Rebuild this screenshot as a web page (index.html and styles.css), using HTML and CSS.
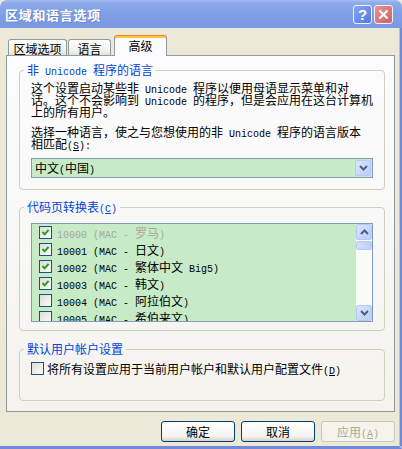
FILE: index.html
```html
<!DOCTYPE html>
<html lang="zh-CN">
<head>
<meta charset="utf-8">
<title>区域和语言选项</title>
<link rel="stylesheet" href="styles.css">
</head>
<body>
<div class="win">
  <div class="titlebar">
    <span class="title">区域和语言选项</span>
    <div class="tbtns">
      <span class="tb help">?</span>
      <span class="tb close"><svg width="11" height="11" viewBox="0 0 11 11"><path d="M1.5 1.5 L9.5 9.5 M9.5 1.5 L1.5 9.5" stroke="#fff" stroke-width="2.2" fill="none"/></svg></span>
    </div>
  </div>
  <div class="body">
    <div class="client">
      <div class="tabs">
        <div class="tab t1">区域选项</div>
        <div class="tab t2">语言</div>
        <div class="tab active">高级</div>
      </div>
      <div class="panel">
        <fieldset class="g1">
          <legend><span class="ln">非<span class="en"> Unicode </span>程序的语言</span></legend>
          <div class="txt">
            <span class="ln">这个设置启动某些非<span class="en"> Unicode </span>程序以便用母语显示菜单和对</span>
            <span class="ln">话。这个不会影响到<span class="en"> Unicode </span>的程序，但是会应用在这台计算机</span>
            <span class="ln">上的所有用户。</span>
          </div>
          <div class="txt p2">
            <span class="ln">选择一种语言，使之与您想使用的非<span class="en"> Unicode </span>程序的语言版本</span>
            <span class="ln">相匹配<span class="en">(<u>S</u>):</span></span>
          </div>
          <div class="combo">
            <span class="combo-text ln">中文<span class="en">(</span>中国<span class="en">)</span></span>
            <span class="drop"><svg width="9" height="6" viewBox="0 0 9 6"><path d="M1 1 L4.5 4.5 L8 1" stroke="#4d6185" stroke-width="2" fill="none"/></svg></span>
          </div>
        </fieldset>
        <fieldset class="g2">
          <legend><span class="ln">代码页转换表<span class="en">(<u>C</u>)</span></span></legend>
          <div class="list">
            <div class="rows">
              <div class="row dis"><span class="cb"><svg width="9" height="9" viewBox="0 0 9 9"><path d="M1.5 4 L3.6 6.3 L7.6 1.8" stroke="#21a121" stroke-width="2" fill="none"/></svg></span><span class="ln"><span class="en">10000 (MAC - </span>罗马<span class="en">)</span></span></div>
              <div class="row"><span class="cb"><svg width="9" height="9" viewBox="0 0 9 9"><path d="M1.5 4 L3.6 6.3 L7.6 1.8" stroke="#21a121" stroke-width="2" fill="none"/></svg></span><span class="ln"><span class="en">10001 (MAC - </span>日文<span class="en">)</span></span></div>
              <div class="row"><span class="cb"><svg width="9" height="9" viewBox="0 0 9 9"><path d="M1.5 4 L3.6 6.3 L7.6 1.8" stroke="#21a121" stroke-width="2" fill="none"/></svg></span><span class="ln"><span class="en">10002 (MAC - </span>繁体中文<span class="en"> Big5)</span></span></div>
              <div class="row"><span class="cb"><svg width="9" height="9" viewBox="0 0 9 9"><path d="M1.5 4 L3.6 6.3 L7.6 1.8" stroke="#21a121" stroke-width="2" fill="none"/></svg></span><span class="ln"><span class="en">10003 (MAC - </span>韩文<span class="en">)</span></span></div>
              <div class="row"><span class="cb"></span><span class="ln"><span class="en">10004 (MAC - </span>阿拉伯文<span class="en">)</span></span></div>
              <div class="row"><span class="cb"></span><span class="ln"><span class="en">10005 (MAC - </span>希伯来文<span class="en">)</span></span></div>
            </div>
            <div class="sb">
              <span class="sbtn"><svg width="9" height="6" viewBox="0 0 9 6"><path d="M1 5 L4.5 1.5 L8 5" stroke="#4d6185" stroke-width="2" fill="none"/></svg></span>
              <span class="thumb"></span>
              <span class="track"></span>
              <span class="sbtn"><svg width="9" height="6" viewBox="0 0 9 6"><path d="M1 1 L4.5 4.5 L8 1" stroke="#4d6185" stroke-width="2" fill="none"/></svg></span>
            </div>
          </div>
        </fieldset>
        <fieldset class="g3">
          <legend><span class="ln">默认用户帐户设置</span></legend>
          <div class="opt"><span class="cb"></span><span class="ln">将所有设置应用于当前用户帐户和默认用户配置文件<span class="en">(<u>D</u>)</span></span></div>
        </fieldset>
      </div>
      <div class="btns">
        <span class="btn">确定</span>
        <span class="btn">取消</span>
        <span class="btn disabled"><span class="ln">应用<span class="en">(<u>A</u>)</span></span></span>
      </div>
    </div>
  </div>
</div>
</body>
</html>
```
FILE: styles.css
```css
* { box-sizing: border-box; }
body {
  margin: 0;
  background: #ece9d8;
  font-family: "Noto Sans CJK SC", "Noto Sans", sans-serif;
  font-size: 12px;
  line-height: 12px;
  color: #000;
}
.en { font-family: "Liberation Mono", monospace; font-size: 10px; line-height: 10px; }
.ln { display: block; height: 12px; line-height: 12px; white-space: nowrap; overflow: visible; }
.win {
  width: 402px;
  height: 449px;
  display: flex;
  flex-direction: column;
  overflow: hidden;
}
.titlebar {
  height: 28px;
  flex: none;
  display: flex;
  align-items: center;
  padding: 0 9px 0 5px;
  background: linear-gradient(#a6bdf2 0, #8eaaea 3px, #819fe6 45%, #7b99e2 100%);
  border-radius: 7px 7px 0 0;
}
.title {
  flex: 1;
  color: #fff;
  font-weight: 700;
  font-size: 13px;
  letter-spacing: 0.7px;
  line-height: 14px;
  margin-top: 2px;
  text-shadow: 1px 1px 0 #6a86cc;
}
.tbtns { display: flex; gap: 2px; margin-top: 1px; }
.tb {
  width: 19px;
  height: 19px;
  border: 1px solid #eef2fc;
  border-radius: 3px;
  display: flex;
  align-items: center;
  justify-content: center;
}
.help {
  background: linear-gradient(135deg, #86a6f2, #5578e0);
  color: #fff;
  font: bold 15px/15px "Liberation Sans", sans-serif;
}
.close { background: linear-gradient(135deg, #e8948e, #cc6166); }
.body {
  flex: 1;
  display: flex;
  border-right: 3px solid #b3c0e8;
  border-bottom: 3px solid #7189d8;
}
.client {
  flex: 1;
  border-right: 3px solid #6e8bdb;
  padding: 0 5px 0 6px;
  display: flex;
  flex-direction: column;
}
.tabs {
  height: 28px;
  flex: none;
  display: flex;
  align-items: flex-end;
  padding-left: 2px;
  margin-bottom: -1px;
  position: relative;
  z-index: 1;
}
.tab {
  height: 16px;
  margin-bottom: 1px;
  border: 1px solid #919b9c;
  border-bottom: 0;
  border-radius: 3px 3px 0 0;
  background: linear-gradient(#fefefe, #f2f1ec 70%, #e4e2d8);
  display: flex;
  align-items: center;
  justify-content: center;
  padding-top: 2px;
}
.t1 { width: 59px; }
.t2 { width: 43px; margin-left: 1px; }
.tab.active {
  width: 53px;
  height: 21px;
  margin: 0 0 0 3px;
  background: #fcfcfe;
  border-top: 1px solid #e68b2c;
  box-shadow: inset 0 2px 0 #ffc73c;
  padding: 0 0 1px;
}
.panel {
  height: 357px;
  flex: none;
  border: 1px solid #919b9c;
  background: linear-gradient(#fcfcfe, #f4f3ee);
  padding-top: 8px;
}
fieldset {
  margin: 0 9px 0 12px;
  border: 1px solid #d0d0bf;
  border-radius: 4px;
  padding: 6px 11px 11px;
  min-width: 0;
}
legend {
  color: #0046d5;
  padding: 0 3px;
  margin-left: -7px;
  line-height: 12px;
}
.txt { margin: 0; }
.p2 { margin-top: 8px; }
.combo {
  margin-top: 8px;
  height: 20px;
  border: 1px solid #7f9db9;
  background: #c7ebc7;
  display: flex;
  align-items: center;
  padding: 1px;
}
.combo-text { flex: 1; padding-left: 2px; }
.drop, .sbtn {
  width: 16px;
  height: 16px;
  border: 1px solid #b6c9f6;
  border-radius: 2px;
  background: linear-gradient(135deg, #dbe5fd, #b9cdf7);
  display: flex;
  align-items: center;
  justify-content: center;
  flex: none;
}
.g2 { margin-top: 11px; padding: 10px 11px 8px; }
.list {
  height: 99px;
  border: 1px solid #7f9db9;
  background: #c7ebc7;
  display: flex;
  overflow: hidden;
}
.rows { flex: 1; overflow: hidden; }
.row {
  height: 17px;
  display: flex;
  align-items: center;
  gap: 5px;
  padding-left: 7px;
  white-space: nowrap;
}
.row.dis { color: #aca899; }
.cb {
  width: 13px;
  height: 13px;
  flex: none;
  border: 1px solid #1c5180;
  background: linear-gradient(135deg, #dcddd6, #fbfbf9);
  display: flex;
  align-items: center;
  justify-content: center;
}
.sb {
  width: 16px;
  display: flex;
  flex-direction: column;
  background: #fbfbf8;
}
.thumb {
  height: 9px;
  margin-top: 1px;
  border: 1px solid #b6c9f6;
  border-radius: 2px;
  background: linear-gradient(90deg, #d3e0fd, #bccff8);
}
.track { flex: 1; }
.g3 { margin-top: 12px; padding: 7px 11px 25px; }
.opt { display: flex; align-items: center; gap: 3px; white-space: nowrap; }
.btns {
  display: flex;
  justify-content: flex-end;
  gap: 6px;
  margin-top: 9px;
}
.btn {
  width: 74px;
  height: 21px;
  border: 1px solid #003c74;
  border-radius: 3px;
  background: linear-gradient(#ffffff, #f4f4f0 75%, #d8d3c8);
  display: flex;
  align-items: center;
  justify-content: center;
}
.btn.disabled {
  border-color: #c9c7ba;
  color: #aca899;
  background: #f5f4ea;
}
```
